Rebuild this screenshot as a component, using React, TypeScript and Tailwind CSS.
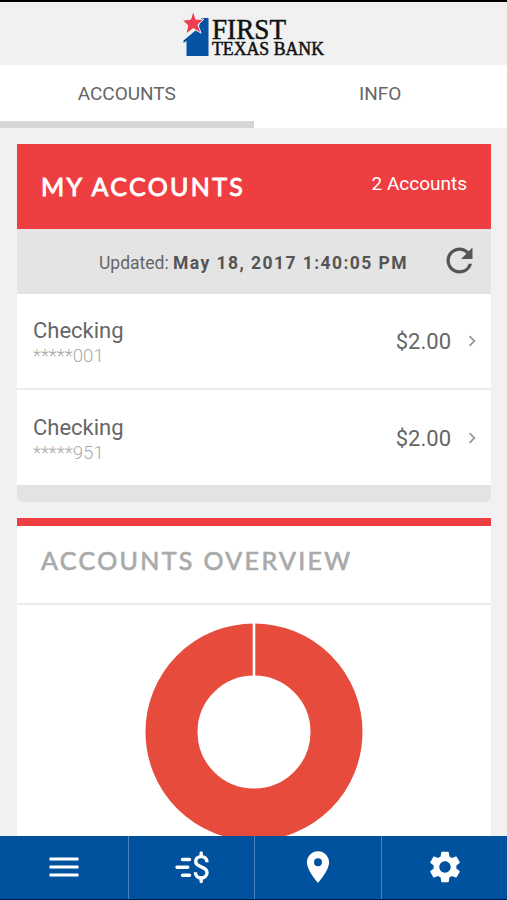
import { MdChevronRight, MdPlace, MdRefresh, MdSettings } from 'react-icons/md';

const accounts = [
  { name: 'Checking', mask: '*****001', balance: '$2.00' },
  { name: 'Checking', mask: '*****951', balance: '$2.00' },
];

function Logo() {
  return (
    <svg width="150" height="52" viewBox="179.5 8 150 52" role="img" aria-label="First Texas Bank">
      <path d="M187 56V41L184 43V40.5L199 28 202 18H209V56Z" fill="#0753a3" />
      <path
        d="M193.7 10.8 196.3 19.2 204.3 19.2 198.4 24.8 201.6 33.2 193.7 28.6 186.4 34.2 188.3 25.3 183 20.2 191.2 19.2Z"
        fill="#ee3f50"
        stroke="#f1f1f1"
        strokeWidth="1"
      />
      <text x="212.5" y="38.8" textLength="74" lengthAdjust="spacingAndGlyphs" fontSize="29" className="font-['Liberation_Serif',serif]" fill="#111" stroke="#111" strokeWidth=".5">FIRST</text>
      <text x="212.5" y="55.4" textLength="112" lengthAdjust="spacingAndGlyphs" fontSize="17.8" className="font-['Liberation_Serif',serif]" fill="#111" stroke="#111" strokeWidth=".5">TEXAS BANK</text>
    </svg>
  );
}

function MenuIcon() {
  return (
    <svg width="30" height="22" viewBox="0 0 30 22" fill="none" stroke="white" strokeWidth="3">
      <path d="M.5 3H29.5M.5 11H29.5M.5 19H29.5" />
    </svg>
  );
}

function TransferIcon() {
  return (
    <svg width="34" height="34" viewBox="0 0 34 34" fill="none" stroke="white" strokeWidth="3.4" strokeLinecap="round">
      <path d="M7.5 9.5H14.5M2 17.3H12.8M7.5 25.2H14.5" />
      <path d="M26.2 3V6M26.2 28.5V31.5" />
      <path d="M32 12.2C32 8.5 29.6 6.6 26.2 6.6S20.7 8.6 20.7 11.6C20.7 18.2 32 15.5 32 22.5C32 26 29.5 28 26.2 28S20.4 26 20.4 22.2" strokeLinecap="butt" />
    </svg>
  );
}

export default function App() {
  return (
    <div className="flex h-[900px] w-[507px] flex-col overflow-hidden border-t-2 border-b border-t-black border-b-[#001b4d] bg-[#f1f1f1] font-['Roboto',sans-serif] text-[#666]">
      <header className="flex h-[63px] shrink-0 justify-center pt-1.5">
        <Logo />
      </header>

      <nav className="grid h-[63px] shrink-0 grid-cols-2 bg-white text-[19px] leading-[58px]">
        <div className="h-[63px] border-b-[7px] border-[#d6d6d6] text-center">ACCOUNTS</div>
        <div className="h-[63px] text-center">INFO</div>
      </nav>

      <main className="min-h-0 flex-1 overflow-hidden pt-4 pr-4 pl-[17px]">
        <section className="overflow-hidden rounded-b-md bg-[#e3e3e3] pb-[17px]">
          <div className="flex h-[85px] justify-between bg-[#ef3e42] pr-6 pl-6 text-white">
            <h1 className="font-['Lato',sans-serif] text-[25px] leading-[84px] tracking-[2.35px] [-webkit-text-stroke:0.9px]">MY ACCOUNTS</h1>
            <span className="text-[19px] leading-[79px]">2 Accounts</span>
          </div>
          <div className="flex h-[65px] items-center bg-[#e4e4e4] pt-[3px] pl-[82px] text-[17.5px] text-[#555]">
            <span className="w-[74px] whitespace-nowrap text-[#666]">Updated:</span>
            <strong className="w-[253px] tracking-[1.44px] whitespace-nowrap">May 18, 2017 1:40:05 PM</strong>
            <MdRefresh className="ml-3.5 size-[39px] shrink-0 -translate-y-[3px]" />
          </div>
          {accounts.map((account, index) => (
            <div key={account.mask} className={`flex items-center bg-white pr-2 pl-4 ${index === 0 ? 'h-24 border-b-2 border-[#ececec]' : 'h-[95px]'}`}>
              <div className="flex-1 pt-1">
                <div className="text-[22px] leading-[26px]">{account.name}</div>
                <div className="text-[18.7px] leading-6 font-light text-[#aaa]">{account.mask}</div>
              </div>
              <div className="pt-px text-[22px]">{account.balance}</div>
              <MdChevronRight className="ml-2.5 size-[22px] text-[#999]" />
            </div>
          ))}
        </section>

        <section className="mt-4 h-[330px] border-t-8 border-[#ef3e42] bg-white">
          <h2 className="h-[79px] border-b-2 border-[#ececec] pl-6 font-['Lato',sans-serif] text-[25px] leading-[68px] tracking-[2.35px] text-[#aaa] [-webkit-text-stroke:0.7px]">ACCOUNTS OVERVIEW</h2>
          <div className="flex justify-center pt-[18px]">
            <svg width="218" height="218" viewBox="0 0 218 218">
              <circle cx="109" cy="109" r="82.5" fill="none" stroke="#e64b3c" strokeWidth="52" />
              <path d="M109 0V54" stroke="white" strokeWidth="2.6" />
            </svg>
          </div>
        </section>
      </main>

      <nav className="grid h-[63px] shrink-0 grid-cols-[128px_126px_127px_126px] bg-[#00529f] pb-0.5 text-white">
        <div className="flex items-center justify-center">
          <MenuIcon />
        </div>
        <div className="-mb-0.5 flex items-center justify-center border-l border-[#4a83ba] pb-0.5">
          <TransferIcon />
        </div>
        <div className="-mb-0.5 flex items-center justify-center border-l border-[#4a83ba] pb-0.5">
          <MdPlace className="size-[38px]" />
        </div>
        <div className="-mb-0.5 flex items-center justify-center border-l border-[#4a83ba] pb-0.5">
          <MdSettings className="size-[38px]" />
        </div>
      </nav>
    </div>
  );
}
